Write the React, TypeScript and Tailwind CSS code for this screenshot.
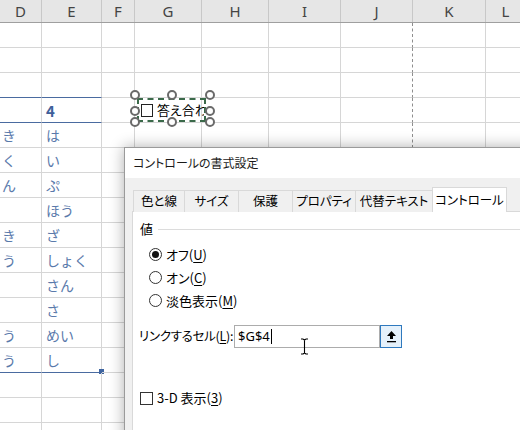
const COLS = [
  { key: 'D', width: 'w-[42px]' },
  { key: 'E', width: 'w-[60px]' },
  { key: 'F', width: 'w-[33px]' },
  { key: 'G', width: 'w-[67px]' },
  { key: 'H', width: 'w-[67px]' },
  { key: 'I', width: 'w-[72px]' },
  { key: 'J', width: 'w-[72px]' },
  { key: 'K', width: 'w-[73px]' },
  { key: 'L', width: 'w-[40px]' },
];

// column D / E contents per row (row 0 sits right under the header)
const DATA: Record<number, [string, string]> = {
  3: ['', '4'],
  4: ['き', 'は'],
  5: ['く', 'い'],
  6: ['ん', 'ぷ'],
  7: ['', 'ほう'],
  8: ['き', 'ざ'],
  9: ['う', 'しょく'],
  10: ['', 'さん'],
  11: ['', 'さ'],
  12: ['う', 'めい'],
  13: ['う', 'し'],
};

// rows whose bottom edge is the blue table rule (D and E only)
const BLUE_BOTTOM = [2, 3, 13];

const jp = "font-['Noto_Sans_CJK_JP',sans-serif] [font-feature-settings:'palt']";

function SheetHeader() {
  return (
    <div className="flex h-[23px] border-b border-[#9f9f9f] bg-[#e6e6e6]">
      {COLS.map((col) => (
        <div
          key={col.key}
          className={`${col.width} flex shrink-0 items-center justify-center border-r border-[#c8c8c8] font-['Noto_Sans',sans-serif] text-[15px] text-[#444]`}
        >
          {col.key}
        </div>
      ))}
    </div>
  );
}

function SheetRow({ index }: { index: number }) {
  const [d, e] = DATA[index] ?? ['', ''];
  const blue = BLUE_BOTTOM.includes(index);

  return (
    <div className="flex h-[25px]">
      {COLS.map((col, i) => {
        const isTable = i < 2;
        const bottom = blue && isTable ? 'border-b-[#4a6ba0]' : 'border-b-[#d6d6d6]';
        const right = col.key === 'J' ? 'border-r-[#8e8e8e] [border-right-style:dashed]' : 'border-r-[#d6d6d6]';
        const text = i === 0 ? d : i === 1 ? e : '';
        const bold = text === '4';
        return (
          <div
            key={col.key}
            className={`${col.width} relative flex shrink-0 items-center border-r border-b ${right} ${bottom} ${i === 0 ? 'pl-[2px]' : 'pl-[4px]'}`}
          >
            <span
              className={`font-['Noto_Sans_CJK_JP',sans-serif] text-[14px] leading-none ${
                bold ? "font-['Noto_Sans',sans-serif] font-bold text-[15px] text-[#40609a]" : 'text-[#5a7aab]'
              }`}
            >
              {text}
            </span>
            {index === 13 && i === 1 && (
              <div className="absolute right-[-3px] bottom-[-2px] h-[5px] w-[5px] bg-[#3e64a0]" />
            )}
          </div>
        );
      })}
    </div>
  );
}

function Handle({ className }: { className: string }) {
  return (
    <div
      className={`absolute h-[10px] w-[10px] rounded-full border-2 border-[#6a6a6a] bg-white ${className}`}
    />
  );
}

function FormCheckbox() {
  return (
    <div className="absolute top-[90px] left-[130px] h-[37px] w-[85px]">
      <div className="absolute top-[8px] left-[7px] flex h-[24px] w-[69px] items-center overflow-hidden border-2 border-dashed border-[#3b6a4a] pl-[2px]">
        <div className="h-[13px] w-[12px] shrink-0 border border-[#222] bg-white" />
        <span className={`${jp} ml-[4px] whitespace-nowrap text-[13px] text-black`}>答え合わせ</span>
      </div>
      <Handle className="top-0 left-0" />
      <Handle className="top-0 left-[37px]" />
      <Handle className="top-0 left-[75px]" />
      <Handle className="top-[16px] left-0" />
      <Handle className="top-[16px] left-[75px]" />
      <Handle className="top-[27px] left-0" />
      <Handle className="top-[27px] left-[37px]" />
      <Handle className="top-[27px] left-[75px]" />
    </div>
  );
}

const TABS = [
  { label: '色と線', width: 'w-[52px]' },
  { label: 'サイズ', width: 'w-[55px]' },
  { label: '保護', width: 'w-[55px]' },
  { label: 'プロパティ', width: 'w-[64px]' },
  { label: '代替テキスト', width: 'w-[78px]' },
  { label: 'コントロール', width: 'w-[75px]', active: true },
];

function Accel({ children }: { children: string }) {
  return <span className="underline underline-offset-2">{children}</span>;
}

function Radio({ checked, children }: { checked?: boolean; children: React.ReactNode }) {
  return (
    <div className="flex h-[23px] items-center pl-[9px]">
      <div className="flex h-[13px] w-[13px] items-center justify-center rounded-full border border-[#333] bg-white">
        {checked && <div className="h-[7px] w-[7px] rounded-full bg-[#111]" />}
      </div>
      <span className="ml-[4px] text-[13px]">{children}</span>
    </div>
  );
}

function Dialog() {
  return (
    <div
      className={`${jp} absolute top-[147px] left-[124px] h-[300px] w-[420px] border-t border-l border-[#9a9a9a] bg-[#f0f0f0] text-black shadow-[0_0_14px_rgba(0,0,0,0.32)]`}
    >
      <div className="flex h-[30px] items-center bg-white pl-[8px] text-[12px] text-[#1a1a1a]">
        コントロールの書式設定
      </div>

      <div className="px-[7px] pt-[9px]">
        <div className="flex items-end pl-[1px]">
          {TABS.map((tab) =>
            tab.active ? (
              <div
                key={tab.label}
                className={`${tab.width} relative z-10 -ml-px flex h-[25px] items-center justify-center border border-b-0 border-[#d9d9d9] bg-white text-[12.5px]`}
              >
                {tab.label}
              </div>
            ) : (
              <div
                key={tab.label}
                className={`${tab.width} -ml-px flex h-[22px] items-center justify-center border border-b-0 border-[#d9d9d9] bg-[#f0f0f0] text-[12.5px] first:ml-0`}
              >
                {tab.label}
              </div>
            ),
          )}
        </div>

        <div className="-mt-px h-[240px] border border-[#d9d9d9] bg-white pt-[9px] pl-[7px] text-[13px]">
          <div className="flex h-[16px] items-center">
            <span>値</span>
            <div className="ml-[5px] h-px flex-1 bg-[#dcdcdc]" />
          </div>

          <div className="mt-[6px]">
            <Radio checked>
              オフ(<Accel>U</Accel>)
            </Radio>
            <Radio>
              オン(<Accel>C</Accel>)
            </Radio>
            <Radio>
              淡色表示(<Accel>M</Accel>)
            </Radio>
          </div>

          <div className="mt-[13px] flex h-[23px] items-center">
            <span className="-ml-px w-[95px] shrink-0 whitespace-nowrap text-[12.5px] tracking-[-0.3px]">
              リンクするセル(<Accel>L</Accel>):
            </span>
            <div className="flex h-[23px] w-[146px] items-center border border-[#acacac] pl-[3px] font-['Noto_Sans',sans-serif] text-[13px]">
              $G$4
              <span className="ml-[1px] h-[15px] w-px bg-black" />
            </div>
            <div className="flex h-[23px] w-[22px] items-center justify-center border border-[#2f79be] bg-[#e5f1fb]">
              <svg width="11" height="13" viewBox="0 0 11 13">
                <path d="M5.5 1 L10 6 H7 V9 H4 V6 H1 Z" fill="#000" />
                <rect x="1" y="11" width="9" height="1.3" fill="#000" />
              </svg>
            </div>
          </div>

          <div className="mt-[43px] flex h-[14px] items-center">
            <div className="h-[13px] w-[13px] border border-[#333] bg-white" />
            <span className="ml-[4px]">
              3-D 表示(<Accel>3</Accel>)
            </span>
          </div>
        </div>
      </div>

      {/* text cursor hovering over the reference field */}
      <svg className="absolute top-[190px] left-[175px]" width="9" height="17" viewBox="0 0 9 17">
        <path d="M1 1 H3.5 M5.5 1 H8 M4.5 1.5 V15.5 M1 16 H3.5 M5.5 16 H8 M3 1 L4.5 2 L6 1 M3 16 L4.5 15 L6 16" stroke="#000" strokeWidth="1.1" fill="none" />
      </svg>
    </div>
  );
}

export default function App() {
  return (
    <div className="relative h-[430px] w-[520px] overflow-hidden bg-white">
      <div className="w-[560px]">
        <SheetHeader />
        {Array.from({ length: 17 }, (_, i) => (
          <SheetRow key={i} index={i} />
        ))}
      </div>
      <FormCheckbox />
      <Dialog />
    </div>
  );
}
